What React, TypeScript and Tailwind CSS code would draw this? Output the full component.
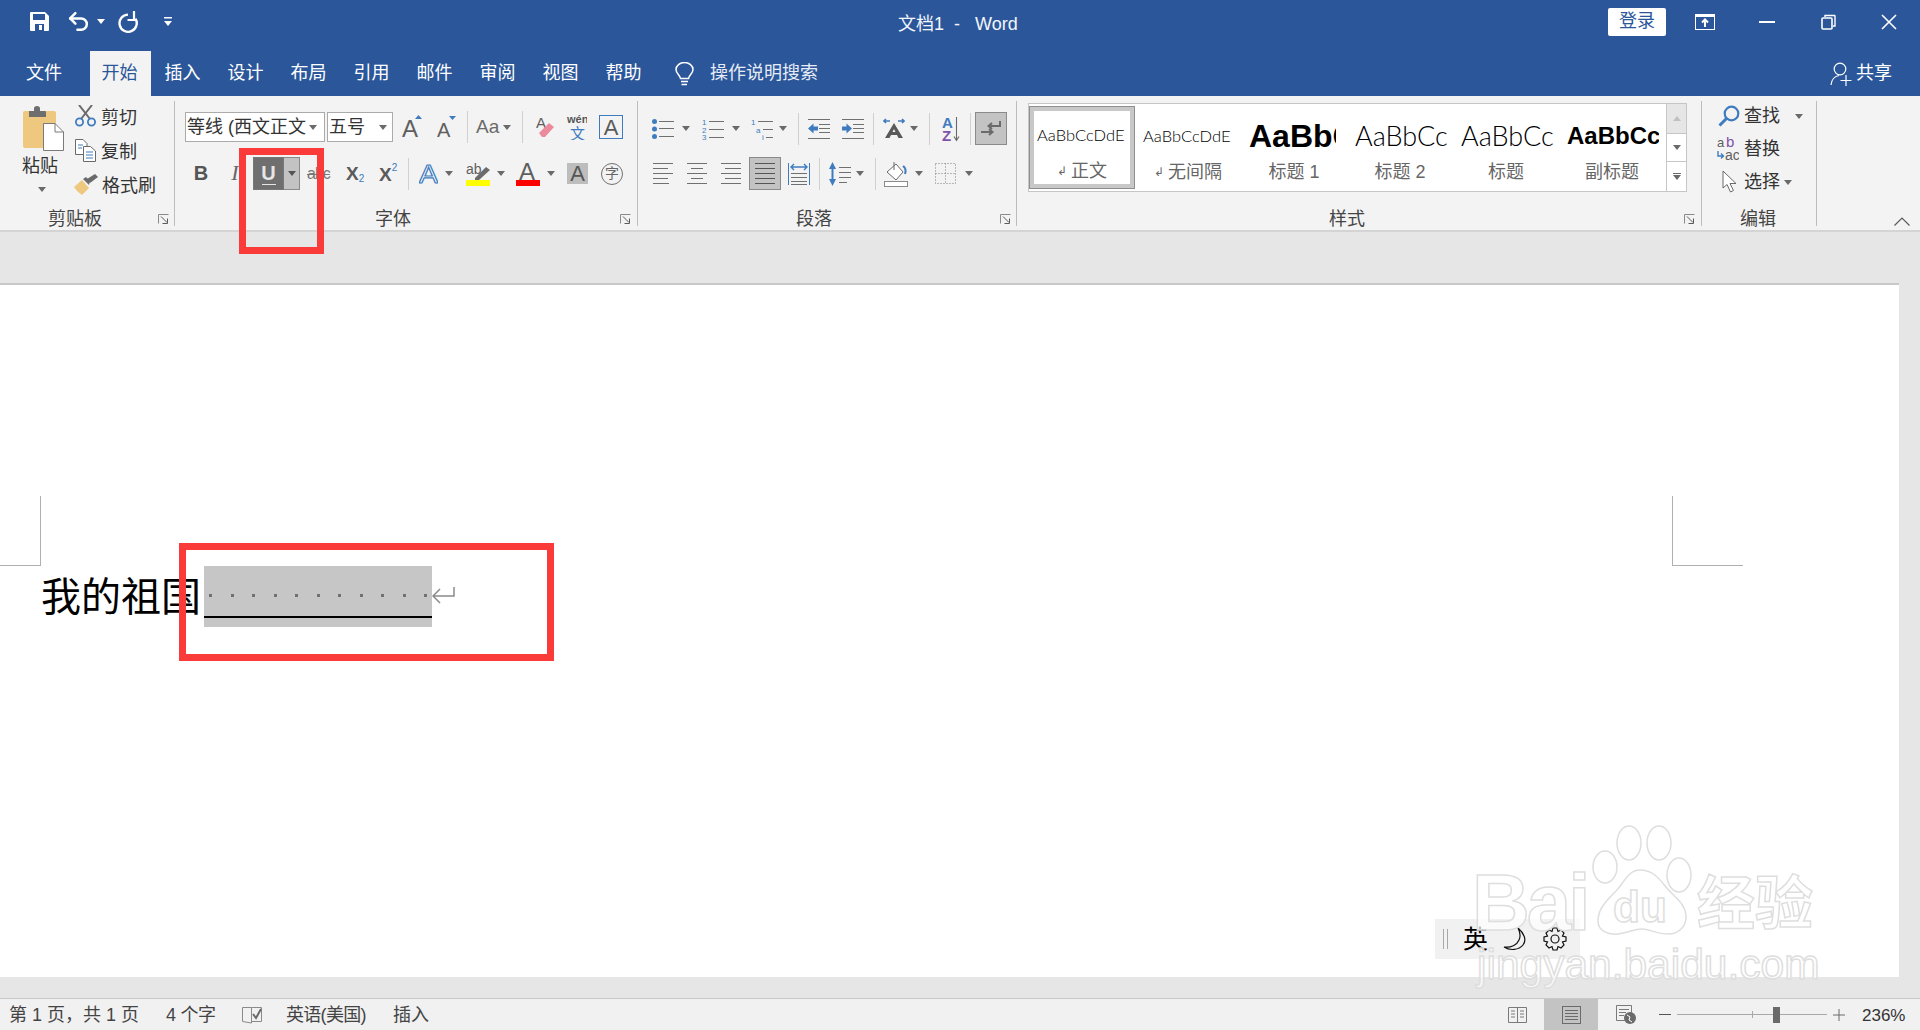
import type { ReactNode } from "react";
import { Undo2 } from "lucide-react";

const gray = "#5f5f5f";
const blue = "#3f7cbf";

function Ic({ w, h, className = "", children }: { w: number; h: number; className?: string; children: ReactNode }) {
  return (
    <svg width={w} height={h} viewBox={`0 0 ${w} ${h}`} className={`shrink-0 ${className}`}>
      {children}
    </svg>
  );
}

function Caret({ className = "", color = "#6a6a6a" }: { className?: string; color?: string }) {
  return (
    <Ic w={8} h={5} className={className}>
      <polygon points="0,0 8,0 4,5" fill={color} />
    </Ic>
  );
}

function Sep({ className = "" }: { className?: string }) {
  return <div className={`w-px h-[32px] bg-[#d0d0d0] shrink-0 ${className}`} />;
}

function GroupSep() {
  return <div className="w-px h-[125px] bg-[#bdbdbd] shrink-0" />;
}

function Launcher({ className = "" }: { className?: string }) {
  return (
    <Ic w={11} h={10} className={className}>
      <path d="M0.5 9.5V0.5H10.5" fill="none" stroke="#8a8a8a" />
      <path d="M3 2.5 9 8.5M9.5 4.5V9.5H4.5" fill="none" stroke="#5a5a5a" />
    </Ic>
  );
}

function GroupLabel({ text, labelClass, launcherClass }: { text: string; labelClass: string; launcherClass?: string }) {
  return (
    <div className="h-[26px] flex items-center text-[18px] leading-[24px] text-[#444444]">
      <span className={`whitespace-nowrap ${labelClass}`}>{text}</span>
      {launcherClass && <Launcher className={launcherClass} />}
    </div>
  );
}

function Lines({ ys, x1, x2, color = "#707070" }: { ys: number[]; x1: number; x2: number; color?: string }) {
  return (
    <>
      {ys.map((y) => (
        <line key={y} x1={x1} x2={x2} y1={y + 0.5} y2={y + 0.5} stroke={color} />
      ))}
    </>
  );
}

function TitleBar() {
  return (
    <div className="h-[51px] pb-[8px] flex items-center text-white">
      <Ic w={19} h={19} className="ml-[30px]">
        <path d="M1 0H15L19 4V18a1 1 0 0 1-1 1H1a1 1 0 0 1-1-1V1a1 1 0 0 1 1-1Z" fill="#fff" />
        <rect x="3" y="2" width="12" height="6" fill="#2b579a" />
        <rect x="5" y="12" width="9" height="7" fill="#2b579a" />
        <rect x="9" y="13" width="3" height="5" fill="#fff" />
      </Ic>
      <Undo2 size={25} strokeWidth={2.4} className="ml-[17px] -mr-[2px] shrink-0" />
      <Caret className="ml-[8px]" color="#ffffff" />
      <Ic w={20} h={22} className="ml-[13px]">
        <path d="M10 3.6A8.6 8.6 0 1 0 17.4 7.6" fill="none" stroke="#fff" strokeWidth="2.4" />
        <path d="M16 0V9H9.5" fill="none" stroke="#fff" strokeWidth="2.2" />
      </Ic>
      <Ic w={8} h={9} className="ml-[26px]">
        <rect x="0" y="0" width="8" height="1.5" fill="#fff" />
        <polygon points="0,4 8,4 4,9" fill="#fff" />
      </Ic>
      <span className="ml-[726px] mt-[5px] w-[122px] text-[18px] whitespace-pre text-[#f2f5fa]">文档1  -   Word</span>
      <div className="ml-[588px] w-[58px] h-[28px] bg-white rounded-[2px] flex items-center justify-center text-[18px] text-[#2b579a]">
        登录
      </div>
      <Ic w={20} h={16} className="ml-[29px]">
        <rect x="0.5" y="0.5" width="19" height="15" fill="none" stroke="#fff" />
        <rect x="0" y="0" width="20" height="3" fill="#fff" />
        <path d="M10 13V6M7 8.5 10 5.5 13 8.5" fill="none" stroke="#fff" strokeWidth="2" />
      </Ic>
      <Ic w={16} h={2} className="ml-[44px]">
        <rect width="16" height="2" fill="#fff" />
      </Ic>
      <Ic w={15} h={16} className="ml-[46px]">
        <rect x="1" y="4" width="10" height="11" rx="1" fill="none" stroke="#fff" strokeWidth="1.6" />
        <path d="M4 3V1.5H13.5a.8.8 0 0 1 .5 .5V12H12" fill="none" stroke="#fff" strokeWidth="1.4" />
      </Ic>
      <Ic w={16} h={16} className="ml-[45px]">
        <path d="M1 1 15 15M15 1 1 15" stroke="#fff" strokeWidth="1.6" />
      </Ic>
    </div>
  );
}

const tabs = ["插入", "设计", "布局", "引用", "邮件", "审阅", "视图", "帮助"];

function TabRow() {
  return (
    <div className="h-[45px] flex items-stretch text-[18px] text-white">
      <div className="w-[90px] pr-[2px] flex items-center justify-center">文件</div>
      <div className="w-[61px] pr-[2px] flex items-center justify-center bg-[#f3f3f3] text-[#2b579a]">开始</div>
      {tabs.map((t) => (
        <div key={t} className="w-[63px] flex items-center justify-center">
          {t}
        </div>
      ))}
      <div className="ml-[20px] flex items-center">
        <Ic w={19} h={24}>
          <path
            d="M5.5 16.5C5 13 1 11.5 1 7.5a8.5 7 0 0 1 17 0C18 11.5 14 13 13.5 16.5Z"
            fill="none"
            stroke="#fff"
            strokeWidth="1.5"
          />
          <path d="M6 19.5H13M6.5 22.5H12" stroke="#fff" strokeWidth="1.6" />
        </Ic>
        <span className="ml-[16px] text-[#e6ecf5]">操作说明搜索</span>
      </div>
      <div className="ml-auto mr-[28px] flex items-center">
        <Ic w={22} h={24}>
          <circle cx="10" cy="7" r="5.8" fill="none" stroke="#fff" strokeWidth="1.2" />
          <path d="M1 23C1.5 17.5 5 14 9 13.5" fill="none" stroke="#fff" strokeWidth="1.2" />
          <path d="M16 13V24M10.5 18.5H21.5" stroke="#fff" strokeWidth="1.2" />
        </Ic>
        <span className="ml-[4px]">共享</span>
      </div>
    </div>
  );
}

function ClipboardGroup() {
  return (
    <div className="w-[174px] shrink-0">
      <div className="h-[105px] flex">
        <div className="ml-[22px] w-[52px] flex flex-col">
          <Ic w={41} h={45} className="mt-[5px] ml-[1px]">
            <rect x="0" y="5" width="33" height="37" rx="2" fill="#edc87e" />
            <path d="M6 5h5V2.5a3 2.5 0 0 1 6 0V5h5a1 1 0 0 1 1 1V11H6Z" fill="#6e6e6e" />
            <path d="M20.5 17.5H32L40.5 26V44.5H20.5Z" fill="#fff" stroke="#7a7a7a" />
            <path d="M32 17.5V26H40.5" fill="none" stroke="#7a7a7a" />
          </Ic>
          <span className="mt-[4px] text-[18px] leading-[22px] text-[#333333] whitespace-nowrap">粘贴</span>
          <Caret className="mt-[10px] ml-[16px]" />
        </div>
        <div className="flex flex-col">
          <div className="h-[34px] flex items-center">
            <Ic w={21} h={22} className="ml-[1px] -mt-[5px]">
              <path d="M4 0 15 14M17 0 6 14" stroke="#6a6a6a" strokeWidth="2" />
              <circle cx="4.5" cy="17" r="3.6" fill="none" stroke={blue} strokeWidth="1.8" />
              <circle cx="16.5" cy="17" r="3.6" fill="none" stroke={blue} strokeWidth="1.8" />
            </Ic>
            <span className="ml-[5px] text-[18px] text-[#333333]">剪切</span>
          </div>
          <div className="h-[34px] flex items-center">
            <Ic w={21} h={23} className="ml-[1px] -mt-[4px]">
              <path d="M.5 .5H8L12 4.5V15.5H.5Z" fill="#fff" stroke="#6a6a6a" />
              <path d="M8.5 7.5H15.5L20.5 12V22.5H8.5Z" fill="#fff" stroke="#6a6a6a" />
              <path d="M3 6H8M3 9H7M11 13H18M11 16H18M11 19H18" stroke={blue} />
            </Ic>
            <span className="ml-[5px] text-[18px] text-[#333333]">复制</span>
          </div>
          <div className="h-[34px] flex items-center">
            <Ic w={24} h={21} className="-mt-[4px]">
              <path d="M0 13 8 6 15 14 8 21C5 19 2 16 0 13Z" fill="#edc87e" />
              <path d="M9 5 12 3 16 7 15 11Z" fill="#6a6a6a" />
              <path d="M13 5 21 0 24 3 16 9Z" fill="#6a6a6a" />
            </Ic>
            <span className="ml-[4px] text-[18px] text-[#333333]">格式刷</span>
          </div>
        </div>
      </div>
      <GroupLabel text="剪贴板" labelClass="ml-[48px]" launcherClass="ml-[56px]" />
    </div>
  );
}

function FontGroup() {
  return (
    <div className="w-[462px] shrink-0">
      <div className="h-[105px] pt-[11px]">
        <div className="h-[30px] flex items-center">
          <div className="ml-[10px] w-[140px] h-[30px] bg-white border border-[#ababab] flex items-center pl-[1px] text-[18px] text-[#333333] whitespace-nowrap">
            <span className="w-[122px]">等线 (西文正文</span>
            <Caret />
          </div>
          <div className="ml-[2px] w-[66px] h-[30px] bg-white border border-[#ababab] flex items-center pl-[1px] text-[18px] text-[#333333]">
            <span className="w-[50px]">五号</span>
            <Caret />
          </div>
          <Ic w={20} h={30} className="ml-[9px]">
            <text x="0" y="25" fontSize="24" fill={gray} fontFamily="Liberation Sans">A</text>
            <polygon points="13,7 20,7 16.5,3" fill={blue} />
          </Ic>
          <Ic w={19} h={30} className="ml-[15px]">
            <text x="0" y="25" fontSize="20" fill={gray} fontFamily="Liberation Sans">A</text>
            <polygon points="12,4 19,4 15.5,8" fill={blue} />
          </Ic>
          <Sep className="ml-[11px]" />
          <span className="ml-[8px] w-[24px] text-[19px] text-[#6a6a6a] whitespace-nowrap">Aa</span>
          <Caret className="ml-[3px]" />
          <Sep className="ml-[11px]" />
          <Ic w={18} h={24} className="ml-[13px]">
            <text x="0" y="13" fontSize="15" fill={gray} fontFamily="Liberation Sans">A</text>
            <path d="M3 18 13 8 18 12 9 22H6Z" fill="#ea8a9a" />
          </Ic>
          <Ic w={20} h={26} className="ml-[13px]">
            <text x="0" y="9" fontSize="11" fontWeight="700" fill="#555555" fontFamily="Liberation Sans">wén</text>
            <text x="3" y="25" fontSize="15" fill={blue} fontFamily="Noto Sans CJK SC">文</text>
          </Ic>
          <div className="ml-[12px] w-[24px] h-[24px] border border-[#3f7cbf] flex items-center justify-center text-[22px] font-medium text-[#5a5a5a]">
            A
          </div>
        </div>
        <div className="mt-[15px] h-[33px] flex items-center">
          <span className="ml-[18px] -mt-[2px] w-[16px] text-center text-[20px] font-bold text-[#555555]">B</span>
          <span className="ml-[20px] -mt-[2px] w-[12px] text-center text-[22px] italic font-['Liberation_Serif',serif] text-[#666666]">I</span>
          <div className="ml-[12px] w-[47px] h-[33px] flex">
            <div className="w-[31px] bg-[#6f6f6f] border border-[#777777] flex flex-col items-center justify-center">
              <span className="text-[20px] leading-[20px] font-bold text-[#e6e6e6]">U</span>
              <div className="w-[14px] h-px bg-[#e6e6e6] mt-[1px]" />
            </div>
            <div className="w-[16px] bg-[#c3c3c3] border border-l-0 border-[#8a8a8a] flex items-center justify-center">
              <Caret color="#555555" />
            </div>
          </div>
          <span className="ml-[7px] w-[24px] text-[16px] tracking-[-1px] text-[#777777] line-through whitespace-nowrap">abc</span>
          <div className="ml-[15px] w-[20px] flex items-end text-[#5a5a5a]">
            <span className="text-[19px] font-bold leading-[20px]">X</span>
            <span className="text-[10px] leading-[10px] text-[#3f7cbf]">2</span>
          </div>
          <div className="ml-[13px] w-[20px] flex items-start text-[#5a5a5a]">
            <span className="text-[19px] font-bold leading-[20px] mt-[2px]">X</span>
            <span className="text-[10px] leading-[10px] text-[#3f7cbf]">2</span>
          </div>
          <Sep className="ml-[9px]" />
          <Ic w={19} h={24} className="ml-[10px]">
            <text
              x="0"
              y="21"
              fontSize="26"
              fontFamily="Liberation Sans"
              fill="#ffffff"
              stroke={blue}
              strokeWidth="1.2"
              textLength="19"
              lengthAdjust="spacingAndGlyphs"
            >
              A
            </text>
          </Ic>
          <Caret className="ml-[7px]" />
          <Ic w={24} h={24} className="ml-[13px]">
            <text x="0" y="12" fontSize="14" fill={gray} fontFamily="Liberation Sans">ab</text>
            <path d="M9 16 20 5 24 8 13 18 9 18Z" fill="#6a6a6a" />
            <rect x="0" y="18" width="24" height="6" fill="#ffff00" />
          </Ic>
          <Caret className="ml-[7px]" />
          <Ic w={24} h={24} className="ml-[11px]">
            <text x="3" y="18" fontSize="24" fill={gray} fontFamily="Liberation Sans">A</text>
            <rect x="0" y="18" width="24" height="6" fill="#ff0000" />
          </Ic>
          <Caret className="ml-[7px]" />
          <div className="ml-[12px] w-[21px] h-[21px] bg-[#bdbdbd] flex items-center justify-center text-[22px] font-medium text-[#555555]">
            A
          </div>
          <div className="ml-[13px] w-[22px] h-[22px] rounded-full border-[1.5px] border-[#707070] flex items-center justify-center text-[14px] text-[#666666]">
            字
          </div>
        </div>
      </div>
      <GroupLabel text="字体" labelClass="ml-[200px]" launcherClass="ml-[209px]" />
    </div>
  );
}

function ParagraphGroup() {
  return (
    <div className="w-[378px] shrink-0">
      <div className="h-[105px] pt-[11px]">
        <div className="h-[33px] flex items-center">
          <Ic w={22} h={20} className="ml-[14px]">
            <circle cx="2.5" cy="2.5" r="2.5" fill={blue} />
            <circle cx="2.5" cy="10" r="2.5" fill={blue} />
            <circle cx="2.5" cy="17.5" r="2.5" fill={blue} />
            <Lines ys={[2, 9, 17]} x1={7} x2={22} />
          </Ic>
          <Caret className="ml-[8px]" />
          <Ic w={22} h={22} className="ml-[12px]">
            <text x="0" y="7" fontSize="8" fill={blue} fontFamily="Liberation Sans">1</text>
            <text x="0" y="14.5" fontSize="8" fill={blue} fontFamily="Liberation Sans">2</text>
            <text x="0" y="22" fontSize="8" fill={blue} fontFamily="Liberation Sans">3</text>
            <Lines ys={[3, 11, 19]} x1={7} x2={22} />
          </Ic>
          <Caret className="ml-[8px]" />
          <Ic w={24} h={22} className="ml-[11px]">
            <text x="0" y="7" fontSize="8" fill={blue} fontFamily="Liberation Sans">1</text>
            <text x="5" y="14.5" fontSize="8" fill={blue} fontFamily="Liberation Sans">a</text>
            <text x="11" y="22" fontSize="8" fill={blue} fontFamily="Liberation Sans">i</text>
            <Lines ys={[3]} x1={7} x2={22} />
            <Lines ys={[11]} x1={12} x2={22} />
            <Lines ys={[19]} x1={15} x2={22} />
          </Ic>
          <Caret className="ml-[4px]" />
          <Sep className="ml-[11px]" />
          <Ic w={22} h={20} className="ml-[9px]">
            <Lines ys={[0, 19]} x1={0} x2={22} />
            <Lines ys={[5, 9, 13]} x1={11} x2={22} />
            <path d="M0 9.5 5.5 4.5V7.5H10V11.5H5.5V14.5Z" fill={blue} />
          </Ic>
          <Ic w={22} h={20} className="ml-[12px]">
            <Lines ys={[0, 19]} x1={0} x2={22} />
            <Lines ys={[5, 9, 13]} x1={11} x2={22} />
            <path d="M10 9.5 4.5 4.5V7.5H0V11.5H4.5V14.5Z" fill={blue} />
          </Ic>
          <Sep className="ml-[9px]" />
          <Ic w={22} h={22} className="ml-[9px]">
            <path d="M1 3H7M15 3H21M3 1 1 3 3 5M19 1 21 3 19 5" fill="none" stroke={blue} strokeWidth="1.6" />
            <path d="M11 5 20 20H15.5L14 17H8L6.5 20H2Z M9.5 14H12.5L11 11Z" fill="#5a5a5a" fillRule="evenodd" />
          </Ic>
          <Caret className="ml-[5px]" />
          <Sep className="ml-[11px]" />
          <Ic w={18} h={26} className="ml-[12px]">
            <text x="0" y="12" fontSize="15" fontWeight="700" fill={blue} fontFamily="Liberation Sans">A</text>
            <text x="0" y="25" fontSize="15" fontWeight="700" fill="#8050a8" fontFamily="Liberation Sans">Z</text>
            <path d="M14.5 1V24M12 20.5 14.5 24.5 17 20.5" fill="none" stroke="#6a6a6a" strokeWidth="1.1" />
          </Ic>
          <Sep className="ml-[10px]" />
          <div className="ml-[4px] w-[32px] h-[33px] bg-[#c3c3c3] border border-[#8a8a8a] flex items-center justify-center">
            <Ic w={20} h={18}>
              <path d="M19 1V6H8M11 3 7.5 6 11 9" fill="none" stroke="#6a6a6a" strokeWidth="2" />
              <path d="M0 12H11M8 9 11.5 12 8 15" fill="none" stroke="#6a6a6a" strokeWidth="2" />
            </Ic>
          </div>
        </div>
        <div className="mt-[12px] h-[33px] flex items-center">
          <Ic w={20} h={21} className="ml-[15px]">
            <Lines ys={[0, 10]} x1={0} x2={20} />
            <Lines ys={[5, 15]} x1={0} x2={15} />
            <Lines ys={[20]} x1={0} x2={16} />
          </Ic>
          <Ic w={20} h={21} className="ml-[14px]">
            <Lines ys={[0, 10, 20]} x1={0} x2={20} />
            <Lines ys={[5, 15]} x1={4} x2={16} />
          </Ic>
          <Ic w={20} h={21} className="ml-[14px]">
            <Lines ys={[0, 10, 20]} x1={0} x2={20} />
            <Lines ys={[5, 15]} x1={4} x2={20} />
          </Ic>
          <div className="ml-[8px] w-[32px] h-[33px] bg-[#c3c3c3] border border-[#8a8a8a] flex items-center justify-center">
            <Ic w={20} h={21}>
              <Lines ys={[0, 5, 10, 15, 20]} x1={0} x2={20} color="#555555" />
            </Ic>
          </div>
          <Ic w={22} h={22} className="ml-[7px]">
            <path d="M.5 0V22M21.5 0V22" stroke={blue} />
            <path d="M3 4H19M6 1 3 4 6 7M16 1 19 4 16 7" fill="none" stroke={blue} strokeWidth="1.4" />
            <Lines ys={[10, 14, 18, 21]} x1={3} x2={19} />
          </Ic>
          <Sep className="ml-[9px]" />
          <Ic w={22} h={24} className="ml-[9px]">
            <path d="M3.5 6V18" stroke={blue} strokeWidth="2" />
            <polygon points="3.5,0 7,7 0,7" fill={blue} />
            <polygon points="3.5,24 7,17 0,17" fill={blue} />
            <Lines ys={[5, 10, 15]} x1={10} x2={22} />
            <Lines ys={[20]} x1={10} x2={18} />
          </Ic>
          <Caret className="ml-[5px]" />
          <Sep className="ml-[11px]" />
          <Ic w={24} h={26} className="ml-[8px]">
            <path d="M3 11 12 3 19 11 12 19Z" fill="#fff" stroke="#6a6a6a" />
            <path d="M10 1V9" stroke="#6a6a6a" />
            <path d="M19 5C22 7 22 10 21 13" fill="none" stroke={blue} strokeWidth="2" />
            <rect x=".5" y="20.5" width="23" height="5" fill="#fff" stroke="#8a8a8a" />
          </Ic>
          <Caret className="ml-[7px]" />
          <Ic w={21} h={21} className="ml-[12px]">
            <path
              d="M.5 .5H20.5V20.5H.5ZM10.5 .5V20.5M.5 10.5H20.5"
              fill="none"
              stroke="#7a7a7a"
              strokeDasharray="1 2"
            />
          </Ic>
          <Caret className="ml-[9px]" />
        </div>
      </div>
      <GroupLabel text="段落" labelClass="ml-[158px]" launcherClass="ml-[168px]" />
    </div>
  );
}

function StyleCard({
  sample,
  caption,
  mark,
  sampleClass,
  clipClass = "w-[92px]",
}: {
  sample: string;
  caption: string;
  mark?: boolean;
  sampleClass: string;
  clipClass?: string;
}) {
  return (
    <div className="w-[106px] h-full flex flex-col shrink-0">
      <div className={`mt-[12px] ml-[8px] h-[40px] overflow-hidden flex items-center ${clipClass}`}>
        <span className={`whitespace-nowrap text-black ${sampleClass}`}>{sample}</span>
      </div>
      <div className="mt-[4px] h-[24px] flex items-center justify-center text-[18px] text-[#666666] whitespace-nowrap">
        {mark && <span className="text-[12px] mr-[4px]">↲</span>}
        {caption}
      </div>
    </div>
  );
}

function StylesGroup() {
  return (
    <div className="w-[684px] shrink-0">
      <div className="h-[105px] pt-[2px]">
        <div className="ml-[11px] w-[659px] h-[89px] bg-white border border-[#c6c6c6] flex">
          <div className="w-[106px] -my-px py-[3px] shrink-0 h-[89px] flex">
            <div className="w-[106px] h-[83px] border border-[#8f8f8f] flex">
              <div className="w-[104px] h-[81px] border-[4px] border-[#c8c8c8] flex flex-col">
                <div className="mt-[4px] ml-[3px] w-[92px] h-[40px] overflow-hidden flex items-center">
                  <span className="whitespace-nowrap text-black text-[16.5px] font-light font-['Lato',sans-serif]">AaBbCcDdE</span>
                </div>
                <div className="mt-[4px] h-[24px] flex items-center justify-center text-[18px] text-[#666666]">
                  <span className="text-[12px] mr-[4px]">↲</span>正文
                </div>
              </div>
            </div>
          </div>
          <StyleCard sample="AaBbCcDdE" caption="无间隔" mark sampleClass="text-[16.5px] font-light font-['Lato',sans-serif]" />
          <StyleCard sample="AaBbCc" caption="标题 1" sampleClass="text-[32px] font-bold" clipClass="w-[87px]" />
          <StyleCard sample="AaBbCc" caption="标题 2" sampleClass="text-[27px] font-light font-['Lato',sans-serif]" />
          <StyleCard sample="AaBbCc" caption="标题" sampleClass="text-[27px] font-light font-['Lato',sans-serif]" />
          <StyleCard sample="AaBbCc" caption="副标题" sampleClass="text-[24px] font-bold" />
          <div className="ml-auto w-[20px] flex flex-col border-l border-[#c6c6c6]">
            <div className="h-[30px] bg-[#e6e6e6] border-b border-[#c6c6c6] flex items-center justify-center">
              <Ic w={8} h={5}>
                <polygon points="0,5 8,5 4,0" fill="#c0c0c0" />
              </Ic>
            </div>
            <div className="h-[28px] border-b border-[#c6c6c6] flex items-center justify-center">
              <Caret />
            </div>
            <div className="flex-1 flex flex-col items-center justify-center gap-[1px]">
              <div className="w-[8px] h-px bg-[#6a6a6a]" />
              <Caret />
            </div>
          </div>
        </div>
      </div>
      <GroupLabel text="样式" labelClass="ml-[312px]" launcherClass="ml-[319px]" />
    </div>
  );
}

function EditGroup() {
  return (
    <div className="w-[114px] shrink-0">
      <div className="h-[105px] pt-[1px] flex flex-col text-[18px] text-[#333333]">
        <div className="h-[28px] flex items-center">
          <Ic w={22} h={22} className="ml-[16px]">
            <circle cx="13.5" cy="8.5" r="6.8" fill="none" stroke={blue} strokeWidth="2.2" />
            <path d="M8.5 13.5 1.5 20.5" stroke={blue} strokeWidth="3" />
          </Ic>
          <span className="ml-[4px]">查找</span>
          <Caret className="ml-[15px]" />
        </div>
        <div className="mt-[5px] h-[28px] flex items-center">
          <Ic w={22} h={24} className="ml-[15px]">
            <text x="0" y="10" fontSize="13" fill={gray} fontFamily="Liberation Sans">a</text>
            <text x="9" y="10" fontSize="15" fill="#8050a8" fontFamily="Liberation Sans">b</text>
            <text x="8" y="23" fontSize="14" fill={gray} fontFamily="Liberation Sans">ac</text>
            <path d="M1 14V19H6M4 16.5 6.5 19 4 21.5" fill="none" stroke={blue} strokeWidth="1.4" />
          </Ic>
          <span className="ml-[5px]">替换</span>
        </div>
        <div className="mt-[5px] h-[28px] flex items-center">
          <Ic w={16} h={24} className="ml-[20px]">
            <path d="M1 1V18L5 14.5 8.5 22 11.5 20.5 8 13.5H14Z" fill="#fff" stroke="#6a6a6a" />
          </Ic>
          <span className="ml-[6px]">选择</span>
          <Caret className="ml-[4px]" />
        </div>
      </div>
      <GroupLabel text="编辑" labelClass="ml-[38px]" />
    </div>
  );
}

function Ribbon() {
  return (
    <div className="h-[136px] bg-[#f3f3f3] border-b-[2px] border-[#d4d4d4] pt-[5px] flex items-start shrink-0">
      <ClipboardGroup />
      <GroupSep />
      <FontGroup />
      <GroupSep />
      <ParagraphGroup />
      <GroupSep />
      <StylesGroup />
      <GroupSep />
      <EditGroup />
      <GroupSep />
      <Ic w={16} h={9} className="ml-[77px] mt-[116px]">
        <path d="M.5 8.5 8 1 15.5 8.5" fill="none" stroke="#5a5a5a" strokeWidth="1.2" />
      </Ic>
    </div>
  );
}

function Page() {
  return (
    <div className="h-[694px] w-[1899px] bg-white border-t-[2px] border-[#c8c8c8] pt-[211px] shrink-0">
      <div className="h-[70px] flex">
        <div className="w-[41px] h-[70px] border-r border-b border-[#b0b0b0]" />
        <div className="ml-[1631px] w-[71px] h-[70px] border-l border-b border-[#b0b0b0]" />
      </div>
      <div className="h-[61px] flex items-center pl-[41px]">
        <span className="text-[40px] mt-[2px] leading-[59px] text-black whitespace-nowrap w-[163px]">我的祖国</span>
        <div className="w-[228px] h-[61px] bg-[#c6c6c6] flex flex-col">
          <div className="mt-[28px] mx-[5px] flex justify-between">
            {Array.from({ length: 11 }).map((_, i) => (
              <div key={i} className="w-[3px] h-[3px] bg-[#707070]" />
            ))}
          </div>
          <div className="mt-[19px] h-[2px] bg-black" />
        </div>
        <Ic w={23} h={19}>
          <path d="M22 0V9H1M8 2 1 9 8 16" fill="none" stroke="#8a8a8a" strokeWidth="1.5" />
        </Ic>
      </div>
    </div>
  );
}

function StatusBar() {
  return (
    <div className="h-[32px] bg-[#f1f1f1] border-t border-[#c8c8c8] flex items-center text-[18px] text-[#444444] whitespace-nowrap shrink-0">
      <span className="ml-[9px] mt-[2px] w-[131px]">第 1 页，共 1 页</span>
      <span className="ml-[26px] mt-[2px] w-[49px] tracking-[-0.3px]">4 个字</span>
      <Ic w={20} h={18} className="ml-[27px]">
        <path d="M.5 1.5H9.5V17L.5 15.5ZM9.5 1.5H19.5V15.5H10" fill="none" stroke="#8a8a8a" />
        <path d="M11 8 14 12 19 3" fill="none" stroke="#6a6a6a" strokeWidth="2" />
      </Ic>
      <span className="ml-[24px] mt-[2px] w-[79px] tracking-[-0.7px]">英语(美国)</span>
      <span className="ml-[28px] mt-[2px] w-[36px]">插入</span>
      <Ic w={19} h={18} className="ml-[1079px]">
        <path d="M.5 1.5H18.5V16.5H.5ZM9.5 1.5V16.5" fill="none" stroke="#7a7a7a" />
        <path d="M3 5H7M3 8H7M3 11H7M12 5H16M12 8H16M12 11H16" stroke="#7a7a7a" />
      </Ic>
      <div className="ml-[17px] w-[54px] h-full bg-[#c3c3c3] flex items-center justify-center">
        <Ic w={19} h={18}>
          <rect x=".5" y=".5" width="18" height="17" fill="none" stroke="#6a6a6a" />
          <path d="M3 4.5H16M3 7.5H16M3 10.5H16M3 13.5H16" stroke="#6a6a6a" />
        </Ic>
      </div>
      <Ic w={20} h={19} className="ml-[18px]">
        <path d="M.5 .5H15.5V8M9 15.5H.5V.5" fill="none" stroke="#7a7a7a" />
        <path d="M3 4.5H13M3 7.5H10M3 10.5H8" stroke="#7a7a7a" />
        <circle cx="14" cy="13" r="6" fill="#6a6a6a" />
        <path d="M11 10 14 12 13 15 16 17" fill="none" stroke="#ffffff" />
      </Ic>
      <div className="ml-[23px] w-[12px] h-px bg-[#555555]" />
      <div className="ml-[6px] w-[150px] h-[16px] flex items-center">
        <div className="w-[75px] h-px bg-[#a8a8a8]" />
        <div className="w-px h-[7px] bg-[#a8a8a8]" />
        <div className="w-[20px] h-px bg-[#a8a8a8]" />
        <div className="w-[7px] h-[16px] bg-[#6a6a6a]" />
        <div className="flex-1 h-px bg-[#a8a8a8]" />
      </div>
      <Ic w={12} h={12} className="ml-[6px]">
        <path d="M0 6H12M6 0V12" stroke="#6a6a6a" />
      </Ic>
      <span className="ml-[17px] mt-[2px] text-[17px] text-[#333333]">236%</span>
    </div>
  );
}

function Watermark() {
  const stroke = "[-webkit-text-stroke:1.5px_#dedede]";
  return (
    <div className="absolute left-[1477px] top-[825px] w-[345px] h-[165px] text-white/70 pointer-events-none">
      <div className="absolute -left-[5px] top-[42px] flex items-center">
        <span className={`text-[80px] leading-[72px] font-bold tracking-[-3px] ${stroke}`}>Bai</span>
      </div>
      <svg width="105" height="110" viewBox="0 0 105 110" className="absolute left-[113px] top-0">
        <g fill="#ffffff" fillOpacity="0.6" stroke="#dedede" strokeWidth="1.5">
          <ellipse cx="15" cy="42" rx="12" ry="16" />
          <ellipse cx="39" cy="18" rx="12" ry="17" />
          <ellipse cx="69" cy="18" rx="12" ry="17" />
          <ellipse cx="89" cy="50" rx="12" ry="17" />
          <path d="M50 45C38 45 34 58 26 66 16 76 8 84 8 96 8 106 18 110 28 109 38 108 44 104 52 104 60 104 66 109 78 109 90 109 97 100 96 90 95 78 84 72 76 62 68 52 62 45 50 45Z" />
          <text x="23" y="97" fontSize="44" fontFamily="Liberation Sans" fontWeight="700">du</text>
        </g>
      </svg>
      <span className={`absolute left-[220px] top-[46px] text-[58px] leading-[66px] font-bold whitespace-nowrap ${stroke}`}>经验</span>
      <span className={`absolute left-0 top-[115px] text-[42.5px] leading-[50px] whitespace-nowrap ${stroke}`}>jingyan.baidu.com</span>
    </div>
  );
}

function ImeBar() {
  return (
    <div className="absolute left-[1435px] top-[919px] w-[145px] h-[40px] bg-[#eeeeee]/80 flex items-center">
      <div className="ml-[8px] w-[5px] h-[20px] border-x border-[#a8a8a8]" />
      <span className="ml-[15px] text-[25px] leading-[30px] text-black">英</span>
      <Ic w={24} h={24} className="ml-[15px]">
        <path d="M15 1C21 6 24 13 20 18 16 23 7 24 1 20 8 21 14 18 16 13 18 9 17 5 15 1Z" fill="none" stroke="#111111" strokeWidth="1.2" />
      </Ic>
      <Ic w={24} h={24} className="ml-[16px]">
        <circle cx="12" cy="12" r="4" fill="none" stroke="#111111" strokeWidth="1.2" />
        <path
          d="M10 1H14L15 4.5 18 3 21 6 19.5 9 23 10V14L19.5 15 21 18 18 21 15 19.5 14 23H10L9 19.5 6 21 3 18 4.5 15 1 14V10L4.5 9 3 6 6 3 9 4.5Z"
          fill="none"
          stroke="#111111"
          strokeWidth="1.2"
        />
      </Ic>
    </div>
  );
}

export default function App() {
  return (
    <div className="relative w-[1920px] h-[1030px] overflow-hidden flex flex-col bg-[#e6e6e6] font-['Liberation_Sans','Noto_Sans_CJK_SC',sans-serif]">
      <div className="bg-[#2b579a] shrink-0">
        <TitleBar />
        <TabRow />
      </div>
      <Ribbon />
      <div className="h-[51px] shrink-0" />
      <Page />
      <div className="flex-1" />
      <StatusBar />
      <ImeBar />
      <Watermark />
      {/* red annotation boxes */}
      <div className="absolute left-[239px] top-[148px] w-[85px] h-[106px] border-[7px] border-[#fb3a3a]" />
      <div className="absolute left-[179px] top-[543px] w-[375px] h-[118px] border-[7px] border-[#fb3a3a]" />
    </div>
  );
}
